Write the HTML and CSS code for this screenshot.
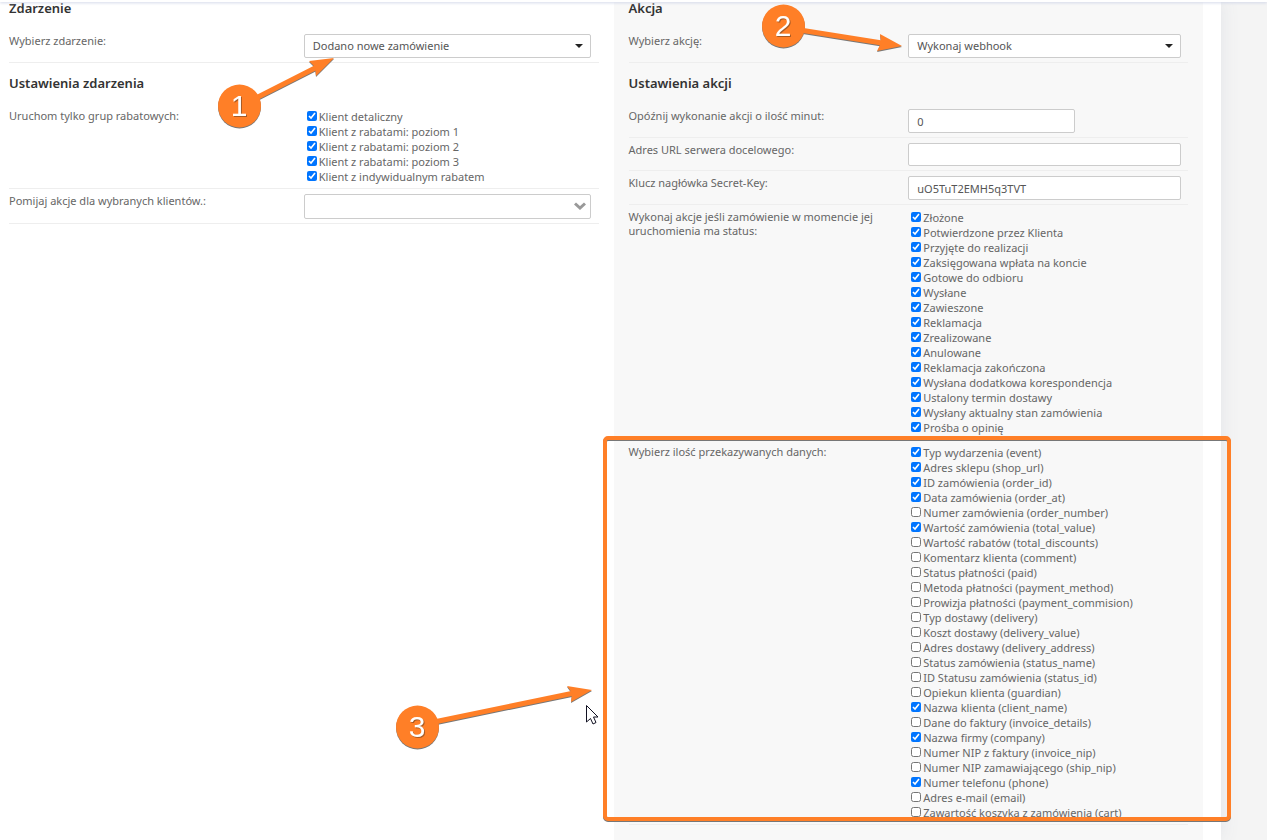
FILE: index.html
```
<!DOCTYPE html>
<html lang="pl">
<head>
    <meta charset="UTF-8">
    <title>Automatyzacja - webhook</title>
    <link rel="stylesheet" href="styles.css">
</head>
<body>
<div class="topbar"></div>

<form class="page">
    <section class="column">
        <h2>Zdarzenie</h2>
        <div class="row">
            <label class="name" for="event">Wybierz zdarzenie:</label>
            <div class="field">
                <div class="select-box">
                    <select id="event"><option>Dodano nowe zamówienie</option></select>
                    <svg class="caret" viewBox="0 0 8 4"><path d="M0 0h8L4 4z" fill="#222"/></svg>
                </div>
            </div>
        </div>

        <h2>Ustawienia zdarzenia</h2>
        <div class="row">
            <span class="name">Uruchom tylko grup rabatowych:</span>
            <div class="field checks">
                <label><input type="checkbox" checked>Klient detaliczny</label>
                <label><input type="checkbox" checked>Klient z rabatami: poziom 1</label>
                <label><input type="checkbox" checked>Klient z rabatami: poziom 2</label>
                <label><input type="checkbox" checked>Klient z rabatami: poziom 3</label>
                <label><input type="checkbox" checked>Klient z indywidualnym rabatem</label>
            </div>
        </div>
        <div class="row">
            <label class="name" for="skip">Pomijaj akcje dla wybranych klientów.:</label>
            <div class="field">
                <div class="select-box clients">
                    <select id="skip"><option></option></select>
                    <svg class="chevron" viewBox="0 0 12 8"><path d="M1 1.500L6 6l5-4.500" fill="none" stroke="#999" stroke-width="3"/></svg>
                </div>
            </div>
        </div>
    </section>

    <section class="column action">
        <h2>Akcja</h2>
        <div class="row">
            <label class="name" for="action">Wybierz akcję:</label>
            <div class="field">
                <div class="select-box">
                    <select id="action"><option>Wykonaj webhook</option></select>
                    <svg class="caret" viewBox="0 0 8 4"><path d="M0 0h8L4 4z" fill="#222"/></svg>
                </div>
            </div>
        </div>

        <h2>Ustawienia akcji</h2>
        <div class="row">
            <label class="name" for="delay">Opóźnij wykonanie akcji o ilość minut:</label>
            <div class="field"><input class="text short" id="delay" type="text" value="0"></div>
        </div>
        <div class="row">
            <label class="name" for="url">Adres URL serwera docelowego:</label>
            <div class="field"><input class="text url" id="url" type="text"></div>
        </div>
        <div class="row">
            <label class="name" for="secret">Klucz nagłówka Secret-Key:</label>
            <div class="field"><input class="text" id="secret" type="text" value="uO5TuT2EMH5q3TVT"></div>
        </div>
        <div class="row">
            <span class="name">Wykonaj akcje jeśli zamówienie w momencie jej uruchomienia ma status:</span>
            <div class="field checks">
                <label><input type="checkbox" checked>Złożone</label>
                <label><input type="checkbox" checked>Potwierdzone przez Klienta</label>
                <label><input type="checkbox" checked>Przyjęte do realizacji</label>
                <label><input type="checkbox" checked>Zaksięgowana wpłata na koncie</label>
                <label><input type="checkbox" checked>Gotowe do odbioru</label>
                <label><input type="checkbox" checked>Wysłane</label>
                <label><input type="checkbox" checked>Zawieszone</label>
                <label><input type="checkbox" checked>Reklamacja</label>
                <label><input type="checkbox" checked>Zrealizowane</label>
                <label><input type="checkbox" checked>Anulowane</label>
                <label><input type="checkbox" checked>Reklamacja zakończona</label>
                <label><input type="checkbox" checked>Wysłana dodatkowa korespondencja</label>
                <label><input type="checkbox" checked>Ustalony termin dostawy</label>
                <label><input type="checkbox" checked>Wysłany aktualny stan zamówienia</label>
                <label><input type="checkbox" checked>Prośba o opinię</label>
            </div>
        </div>
        <div class="row">
            <span class="name">Wybierz ilość przekazywanych danych:</span>
            <div class="field checks">
                <label><input type="checkbox" checked>Typ wydarzenia (event)</label>
                <label><input type="checkbox" checked>Adres sklepu (shop_url)</label>
                <label><input type="checkbox" checked>ID zamówienia (order_id)</label>
                <label><input type="checkbox" checked>Data zamówienia (order_at)</label>
                <label><input type="checkbox">Numer zamówienia (order_number)</label>
                <label><input type="checkbox" checked>Wartość zamówienia (total_value)</label>
                <label><input type="checkbox">Wartość rabatów (total_discounts)</label>
                <label><input type="checkbox">Komentarz klienta (comment)</label>
                <label><input type="checkbox">Status płatności (paid)</label>
                <label><input type="checkbox">Metoda płatności (payment_method)</label>
                <label><input type="checkbox">Prowizja płatności (payment_commision)</label>
                <label><input type="checkbox">Typ dostawy (delivery)</label>
                <label><input type="checkbox">Koszt dostawy (delivery_value)</label>
                <label><input type="checkbox">Adres dostawy (delivery_address)</label>
                <label><input type="checkbox">Status zamówienia (status_name)</label>
                <label><input type="checkbox">ID Statusu zamówienia (status_id)</label>
                <label><input type="checkbox">Opiekun klienta (guardian)</label>
                <label><input type="checkbox" checked>Nazwa klienta (client_name)</label>
                <label><input type="checkbox">Dane do faktury (invoice_details)</label>
                <label><input type="checkbox" checked>Nazwa firmy (company)</label>
                <label><input type="checkbox">Numer NIP z faktury (invoice_nip)</label>
                <label><input type="checkbox">Numer NIP zamawiającego (ship_nip)</label>
                <label><input type="checkbox" checked>Numer telefonu (phone)</label>
                <label><input type="checkbox">Adres e-mail (email)</label>
                <label><input type="checkbox">Zawartość koszyka z zamówienia (cart)</label>
            </div>
        </div>
    </section>
</form>

<!-- numbered steps drawn over the form -->
<svg class="steps" width="1267" height="840" viewBox="0 0 1267 840">
    <g class="marks">
        <rect class="frame" x="605" y="438" width="624" height="381" rx="3"/>
        <path class="shaft" d="M256 98L317 67M800 30L882 43M434 722L574 693"/>
        <path d="M334 58L309 61L315 67L316 76Z"/>
        <path d="M902 46L880 34L881 43L877 51Z"/>
        <path d="M592 690L567 686L572 693L571 702Z"/>
        <circle cx="239.500" cy="106" r="21.500"/>
        <circle cx="783.500" cy="26" r="21.500"/>
        <circle cx="417.500" cy="727" r="21.500"/>
    </g>
    <g class="digits">
        <text x="239" y="116">1</text>
        <text x="783" y="36">2</text>
        <text x="417" y="737">3</text>
    </g>
    <path class="cursor" d="M586.500 705.500v16.500l4-3.500 2.500 5.500 3-1.500-2.500-5.500h4.500z"/>
</svg>
</body>
</html>
```

FILE: styles.css
```
* {
    box-sizing: border-box;
}
body {
    margin: 0;
    background: #f4f4f4;
    color: #666;
    font-family: "Noto Sans", "Open Sans", sans-serif;
    font-size: 11px;
    line-height: 14px;
}
.topbar {
    position: absolute;
    top: 0;
    left: 0;
    right: 0;
    height: 2px;
    background: #fff;
    box-shadow: 0 1px 3px #cdd2e6;
}
.page {
    display: grid;
    grid-template-columns: 51fr 49fr;
    min-height: 100vh;
    margin-right: 46px;
    padding-right: 18px;
    background: #fff;
    box-shadow: 0 0 18px #e2e4e8;
}
.column {
    padding: 0 15px 0 9px;
}
.action {
    padding-left: 15px;
    background: #f8f8f8;
}
h2 {
    margin: 11px 0 12px;
    color: #333;
    font-size: 13px;
    font-weight: 600;
    line-height: 18px;
}
h2:first-child {
    margin-top: -1px;
}
.row {
    display: flex;
    padding: 5px 0 4px;
    border-bottom: 1px solid #eee;
}
.name {
    width: 50%;
    padding-right: 20px;
}
.field {
    width: 50%;
    padding-right: 8px;
}
.action .field {
    padding-right: 7px;
}
.select-box {
    position: relative;
}
select,
.text {
    display: block;
    width: 100%;
    height: 24px;
    margin: 0;
    padding: 0 8px;
    border: 1px solid #ccc;
    border-radius: 2px;
    background: #fff;
    color: #555;
    font: inherit;
    appearance: none;
}
.short {
    width: 167px;
}
.url {
    height: 23px;
}
.clients select {
    height: 25px;
}
.caret,
.chevron {
    position: absolute;
    pointer-events: none;
}
.caret {
    top: 10px;
    right: 8px;
    width: 8px;
    height: 4px;
}
.chevron {
    top: 8px;
    right: 5px;
    width: 12px;
    height: 8px;
}
.checks label {
    display: flex;
    align-items: flex-start;
    line-height: 15px;
}
.checks input {
    flex: none;
    width: 10px;
    height: 10px;
    margin: 2px 2px 0 3px;
}
.steps {
    position: absolute;
    top: 0;
    left: 0;
    pointer-events: none;
}
.marks {
    fill: #ff7f27;
    filter: drop-shadow(0 1px 0 #777);
}
.frame {
    fill: none;
    stroke: #ff7f27;
    stroke-width: 4;
}
.shaft {
    stroke: #ff7f27;
    stroke-width: 5;
}
.digits {
    fill: #fff;
    font-family: "Liberation Sans", Arial, sans-serif;
    font-size: 30px;
    text-anchor: middle;
    filter: drop-shadow(1px 1px 0 #a65a25);
}
.cursor {
    fill: #fff;
    stroke: #111122;
}
```
